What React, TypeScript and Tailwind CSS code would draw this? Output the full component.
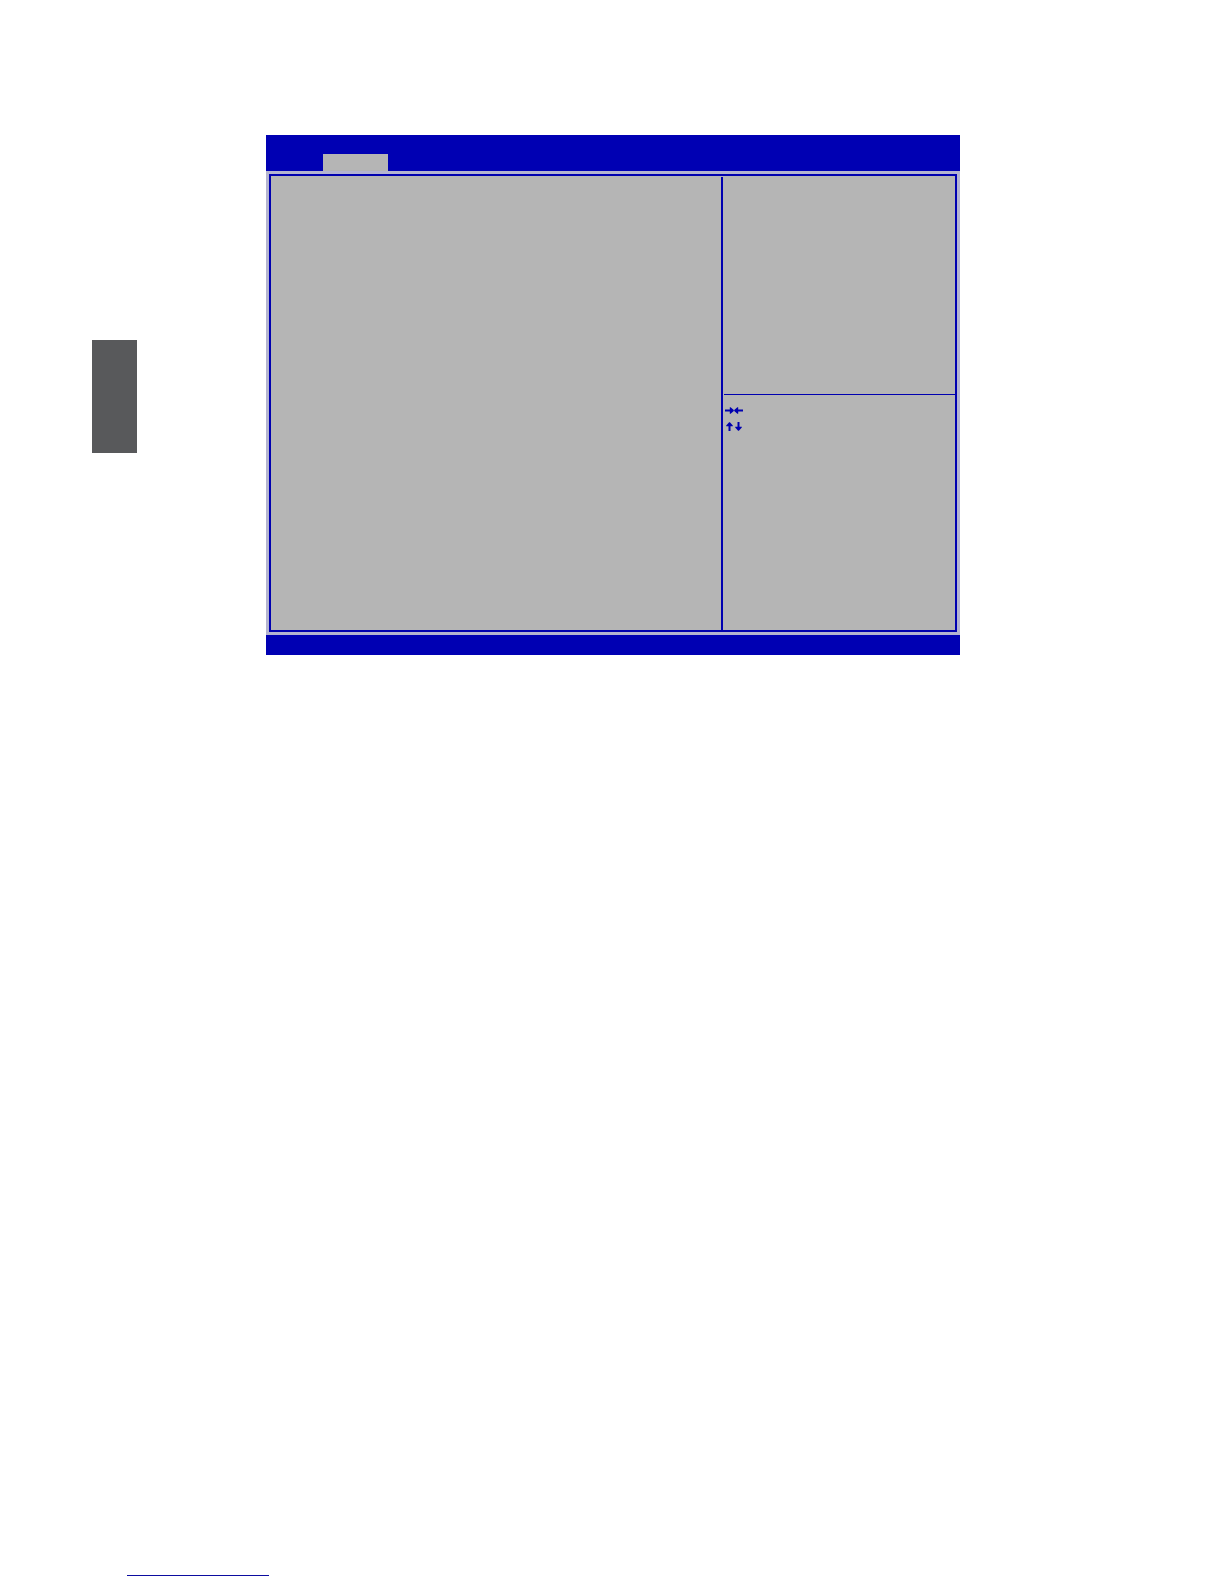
import React from "react";

type ArrowProps = {
  className?: string;
};

const ArrowIcon = ({ className = "" }: ArrowProps) => (
  <svg viewBox="0 0 9 7" fill="currentColor" aria-hidden="true" className={`h-[7px] w-[9px] ${className}`}>
    <path d="M0 2.5H4.8V0.2H5.6L8.8 3.1V3.9L5.6 6.8H4.8V4.5H0Z" />
  </svg>
);

/**
 * Key legend in the lower right pane
 */
const KeyLegend = () => (
  <ul className="flex flex-col gap-1.5 pl-px pt-3 text-[#0000b0]">
    <li className="flex h-[7px] items-center">
      <ArrowIcon />
      <ArrowIcon className="rotate-180" />
    </li>
    <li className="flex h-[13px] items-center">
      <ArrowIcon className="-rotate-90" />
      <ArrowIcon className="rotate-90" />
    </li>
  </ul>
);

/**
 * Setup screen: title bar, options pane, help pane and bottom bar
 */
const SetupScreen = () => (
  <section className="min-w-0 flex-1 bg-[#b5b5b5]">
    <header className="flex h-9 items-end bg-[#0000b3] pl-[57px]">
      <div className="h-[17px] w-[65px] bg-[#b5b5b5]" />
    </header>
    <div className="bg-[#b4b4d0] p-[3px]">
      <div className="grid min-h-[458px] grid-cols-[225fr_117fr] border-2 border-[#0000b0] bg-[#b5b5b5] pt-px">
        <div />
        <aside className="flex flex-col border-l-2 border-[#0000b0] pl-px">
          <div className="h-[218px] border-b border-[#0000b0]" />
          <KeyLegend />
        </aside>
      </div>
    </div>
    <footer className="h-5 bg-[#0000b3]" />
  </section>
);

export default function App() {
  return (
    <div className="flex min-h-screen flex-col bg-white pb-2">
      <main className="flex flex-1 items-start pl-[92px] pr-[264px] pt-[135px]">
        <div className="mr-[129px] mt-[205px] h-[113px] w-[45px] shrink-0 bg-[#58595b]" />
        <SetupScreen />
      </main>
      <footer className="pl-[127px]">
        <div className="w-[142px] border-b border-[#0c0ca0]" />
      </footer>
    </div>
  );
}
